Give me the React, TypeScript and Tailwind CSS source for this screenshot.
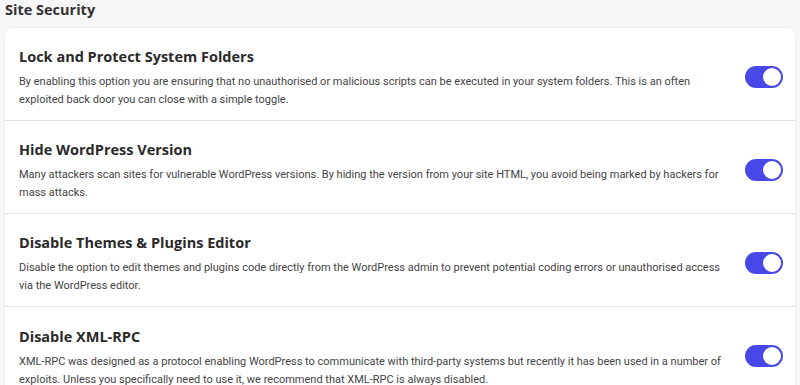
import React from "react";

const items = [
  {
    title: "Lock and Protect System Folders",
    desc: "By enabling this option you are ensuring that no unauthorised or malicious scripts can be executed in your system folders. This is an often exploited back door you can close with a simple toggle.",
  },
  {
    title: "Hide WordPress Version",
    desc: "Many attackers scan sites for vulnerable WordPress versions. By hiding the version from your site HTML, you avoid being marked by hackers for mass attacks.",
  },
  {
    title: "Disable Themes & Plugins Editor",
    desc: "Disable the option to edit themes and plugins code directly from the WordPress admin to prevent potential coding errors or unauthorised access via the WordPress editor.",
  },
  {
    title: "Disable XML-RPC",
    desc: "XML-RPC was designed as a protocol enabling WordPress to communicate with third-party systems but recently it has been used in a number of exploits. Unless you specifically need to use it, we recommend that XML-RPC is always disabled.",
  },
];

export default function App() {
  return (
    <div className="w-[800px] h-[385px] overflow-hidden bg-[#f6f6f6] pl-[5px] pr-[5px]">
      <h2 className="text-[14.5px] font-bold text-[#333] leading-[20px] h-[28px]" style={{ fontFamily: '"Open Sans", sans-serif' }}>
        Site Security
      </h2>
      <div className="bg-white rounded-[8px] w-[790px] shadow-[0_0_3px_rgba(0,0,0,0.06)]">
        {items.map((it, i) => (
          <div
            key={i}
            className={`flex items-center justify-between pl-[14px] pr-[12px] h-[93px] ${i < items.length - 1 ? "border-b border-[#e2e2e2]" : ""}`}
          >
            <div className="w-[712px] pt-[8px]">
              <div className="text-[14.5px] font-bold text-[#2a2a2a] leading-[20px] mb-[6px]" style={{ fontFamily: '"Open Sans", sans-serif' }}>
                {it.title}
              </div>
              <div className="text-[11px] text-[#444] leading-[18px]" style={{ fontFamily: 'Roboto, sans-serif' }}>
                {it.desc}
              </div>
            </div>
            <div className="w-[38px] h-[22px] rounded-full bg-[#4848e8] flex items-center justify-end pr-[2px] shrink-0 mt-[5px]">
              <div className="w-[18px] h-[18px] rounded-full bg-white"></div>
            </div>
          </div>
        ))}
      </div>
    </div>
  );
}
